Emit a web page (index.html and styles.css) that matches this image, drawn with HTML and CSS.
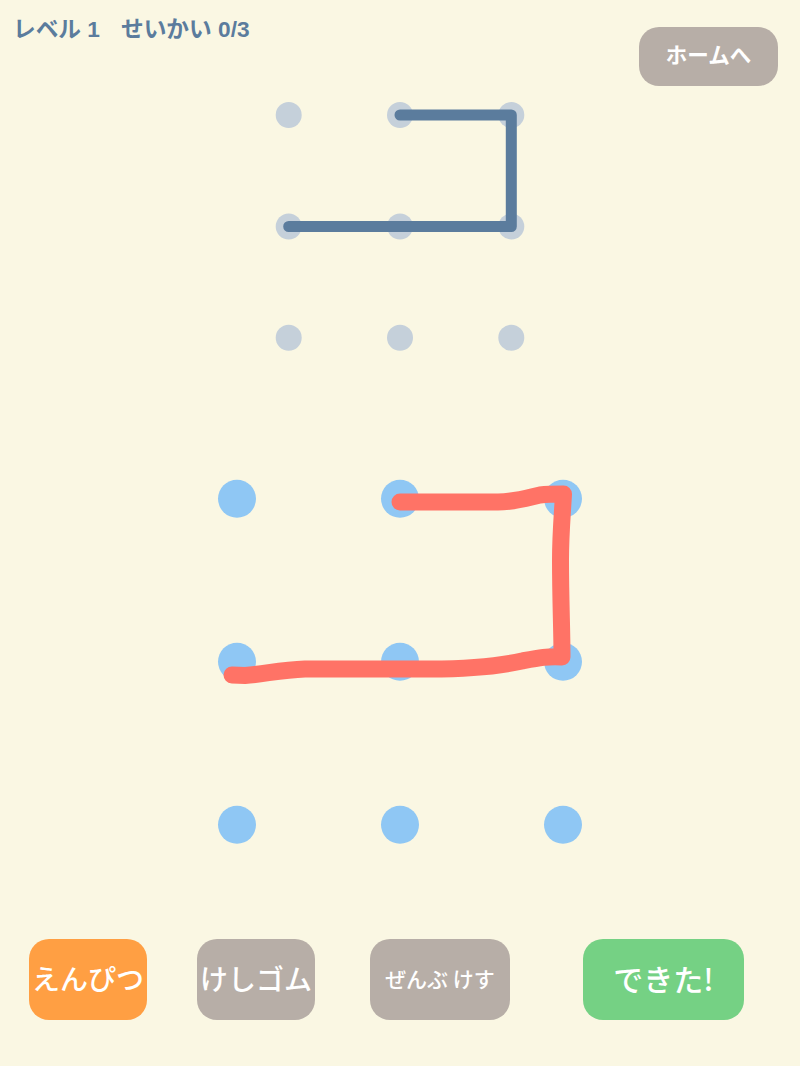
FILE: index.html
```html
<!DOCTYPE html>
<html lang="ja">
<head>
<meta charset="utf-8">
<title>せんつなぎ</title>
<link rel="stylesheet" href="styles.css">
</head>
<body>
<main class="page">
  <svg class="board" viewBox="0 0 800 1066" width="800" height="1066" aria-hidden="true">
    <g class="dot-small">
      <circle cx="288.700" cy="115" r="13"/><circle cx="400" cy="115" r="13"/><circle cx="511.300" cy="115" r="13"/>
      <circle cx="288.700" cy="226.500" r="13"/><circle cx="400" cy="226.500" r="13"/><circle cx="511.300" cy="226.500" r="13"/>
      <circle cx="288.700" cy="337.700" r="13"/><circle cx="400" cy="337.700" r="13"/><circle cx="511.300" cy="337.700" r="13"/>
    </g>
    <path class="line-model" d="M400 115H511.300V226.500H288.700"/>
    <g class="dot-large">
      <circle cx="237" cy="498.700" r="19"/><circle cx="400" cy="498.700" r="19"/><circle cx="563" cy="498.700" r="19"/>
      <circle cx="237" cy="661.700" r="19"/><circle cx="400" cy="661.700" r="19"/><circle cx="563" cy="661.700" r="19"/>
      <circle cx="237" cy="824.700" r="19"/><circle cx="400" cy="824.700" r="19"/><circle cx="563" cy="824.700" r="19"/>
    </g>
    <path class="line-drawn" d="M400 502H498C515 502 527 498 540 495C548 494 555 494 563.500 494C562 520 560.500 535 560.500 560C560.500 600 562 630 562 657C548 656 538 658 522 661C500 666 470 669 430 669H305C280 670 265 674 245 675.500L232 675"/>
  </svg>
  <header class="top">
    <p class="status"><span>レベル 1</span><span>せいかい 0/3</span></p>
    <button class="btn btn-home">ホームへ</button>
  </header>
  <footer class="tools">
    <button class="btn btn-tool btn-pencil">えんぴつ</button>
    <button class="btn btn-tool btn-eraser">けしゴム</button>
    <button class="btn btn-tool btn-clear">ぜんぶ けす</button>
    <button class="btn btn-tool btn-done">できた!</button>
  </footer>
</main>
</body>
</html>
```
FILE: styles.css
```css
* { box-sizing: border-box; }
html, body { margin: 0; padding: 0; }
body {
  background: #faf7e3;
  font-family: "Liberation Sans", "Noto Sans CJK JP", sans-serif;
}
.page {
  position: relative;
  width: 800px;
  height: 1066px;
  overflow: hidden;
  display: flex;
  flex-direction: column;
  justify-content: space-between;
}
.board { position: absolute; left: 0; top: 0; }
.dot-small { fill: #c5d0da; }
.dot-large { fill: #8fc7f4; }
.line-model, .line-drawn { fill: none; stroke-linecap: round; stroke-linejoin: round; }
.line-model { stroke: #5b7c9d; stroke-width: 11; }
.line-drawn { stroke: #ff7366; stroke-width: 17; }
.top {
  position: relative;
  display: flex;
  justify-content: space-between;
  align-items: flex-start;
  padding: 14px 22px 0 13px;
}
.status {
  margin: 0;
  display: flex;
  gap: 21px;
  color: #5b7c9d;
  font-size: 22.700px;
  font-weight: 700;
  line-height: 30px;
}
.btn {
  border: 0;
  color: #fff;
  font-family: "Noto Sans CJK JP", "Liberation Sans", sans-serif;
  font-weight: 500;
  white-space: nowrap;
  display: flex;
  align-items: center;
  justify-content: center;
}
.btn-home {
  width: 139px;
  height: 59px;
  margin-top: 13px;
  padding: 0 0 6px;
  border-radius: 20px;
  background: #b7aea7;
  font-size: 21.500px;
  font-weight: 700;
}
.tools {
  position: relative;
  display: flex;
  padding: 0 0 46px 29px;
}
.btn-tool { height: 81px; padding: 0 0 4px; border-radius: 20px; }
.btn-pencil { width: 118px; background: #ff9f43; font-size: 28px; }
.btn-eraser { width: 118px; margin-left: 50px; background: #b7aea7; font-size: 28px; }
.btn-clear { width: 140px; margin-left: 55px; background: #b7aea7; font-size: 21px; }
.btn-done { width: 161px; margin-left: 73px; background: #75d184; font-size: 30px; }
```
